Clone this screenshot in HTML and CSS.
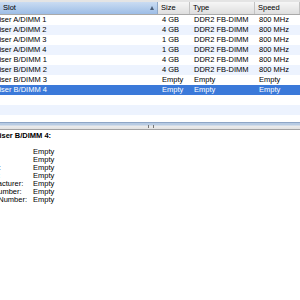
FILE: index.html
```html
<!DOCTYPE html>
<html lang="en">
<head>
    <meta charset="UTF-8">
    <title>Memory</title>
    <link rel="stylesheet" href="styles.css">
</head>
<body>
    <div class="window">
        <div class="top-strip"></div>
        <div class="grid header">
            <div class="hcell sorted">Slot<span class="arrow"></span></div>
            <div class="hcell">Size</div>
            <div class="hcell">Type</div>
            <div class="hcell">Speed</div>
        </div>
        <div class="rows">
            <div class="grid row"><div class="slot">Riser A/DIMM 1</div><div>4 GB</div><div>DDR2 FB-DIMM</div><div>800 MHz</div></div>
            <div class="grid row"><div class="slot">Riser A/DIMM 2</div><div>4 GB</div><div>DDR2 FB-DIMM</div><div>800 MHz</div></div>
            <div class="grid row"><div class="slot">Riser A/DIMM 3</div><div>1 GB</div><div>DDR2 FB-DIMM</div><div>800 MHz</div></div>
            <div class="grid row"><div class="slot">Riser A/DIMM 4</div><div>1 GB</div><div>DDR2 FB-DIMM</div><div>800 MHz</div></div>
            <div class="grid row"><div class="slot">Riser B/DIMM 1</div><div>4 GB</div><div>DDR2 FB-DIMM</div><div>800 MHz</div></div>
            <div class="grid row"><div class="slot">Riser B/DIMM 2</div><div>4 GB</div><div>DDR2 FB-DIMM</div><div>800 MHz</div></div>
            <div class="grid row"><div class="slot">Riser B/DIMM 3</div><div>Empty</div><div>Empty</div><div>Empty</div></div>
            <div class="grid row selected"><div class="slot">Riser B/DIMM 4</div><div>Empty</div><div>Empty</div><div>Empty</div></div>
            <div class="grid row"></div>
            <div class="grid row"></div>
            <div class="grid row"></div>
        </div>
        <div class="splitter"><span class="grip"></span></div>
        <div class="detail">
            <div class="detail-title">Riser B/DIMM 4:</div>
            <div class="props">
                <span class="key">Size:</span><span>Empty</span>
                <span class="key">Type:</span><span>Empty</span>
                <span class="key">Speed:</span><span>Empty</span>
                <span class="key">Status:</span><span>Empty</span>
                <span class="key">Manufacturer:</span><span>Empty</span>
                <span class="key">Part Number:</span><span>Empty</span>
                <span class="key">Serial Number:</span><span>Empty</span>
            </div>
        </div>
    </div>
</body>
</html>
```

FILE: styles.css
```css
body {
    margin: 0;
    width: 300px;
    height: 300px;
    overflow: hidden;
    background-color: white;
    font-family: "Liberation Sans", Arial, sans-serif;
    font-size: 7.5px;
    color: #000;
}
.window {
    margin-left: -10px;
    width: 310px;
}
.top-strip {
    height: 2px;
    background-color: #e4e4e4;
}
.grid {
    display: grid;
    grid-template-columns: 168px 32px 65px 45px;
}
.header {
    height: 12px;
    border-bottom: 1px solid #a9a9a9;
    background: linear-gradient(#f6f6f6, #dedede);
}
.hcell {
    position: relative;
    line-height: 12px;
    padding-left: 3px;
    border-right: 1px solid #c3c3c3;
    white-space: nowrap;
}
.hcell.sorted {
    padding-left: 13px;
    background: linear-gradient(#cadcf2, #9dbde6);
    border-right-color: #8fa9c9;
}
.arrow {
    position: absolute;
    right: 3px;
    top: 4px;
    width: 0;
    height: 0;
    border-left: 2.5px solid transparent;
    border-right: 2.5px solid transparent;
    border-bottom: 4px solid #4a5d78;
}
.rows {
    height: 107px;
    overflow: hidden;
}
.row {
    height: 10px;
    line-height: 10px;
    white-space: nowrap;
}
.row:nth-child(even) {
    background-color: #edf3fe;
}
.row div {
    padding-left: 4px;
}
.row.selected {
    background-color: #3b79d9;
    color: white;
}
.splitter {
    position: relative;
    height: 6px;
    border-top: 1px solid #8ea6c6;
    border-bottom: 1px solid #a4a4a4;
    background: linear-gradient(#b7cbe3 0, #b7cbe3 2px, #ececec 3px, #e2e2e2);
}
.grip {
    position: absolute;
    left: 158px;
    top: 2px;
    width: 4px;
    height: 2px;
    border-left: 1px dotted #777;
    border-right: 1px dotted #777;
}
.detail {
    padding-top: 1px;
    padding-left: 4px;
}
.detail-title {
    font-weight: bold;
    line-height: 10px;
}
.props {
    display: grid;
    grid-template-columns: 56px auto;
    line-height: 8px;
    margin-top: 7px;
    margin-left: -17px;
    white-space: nowrap;
}
```
